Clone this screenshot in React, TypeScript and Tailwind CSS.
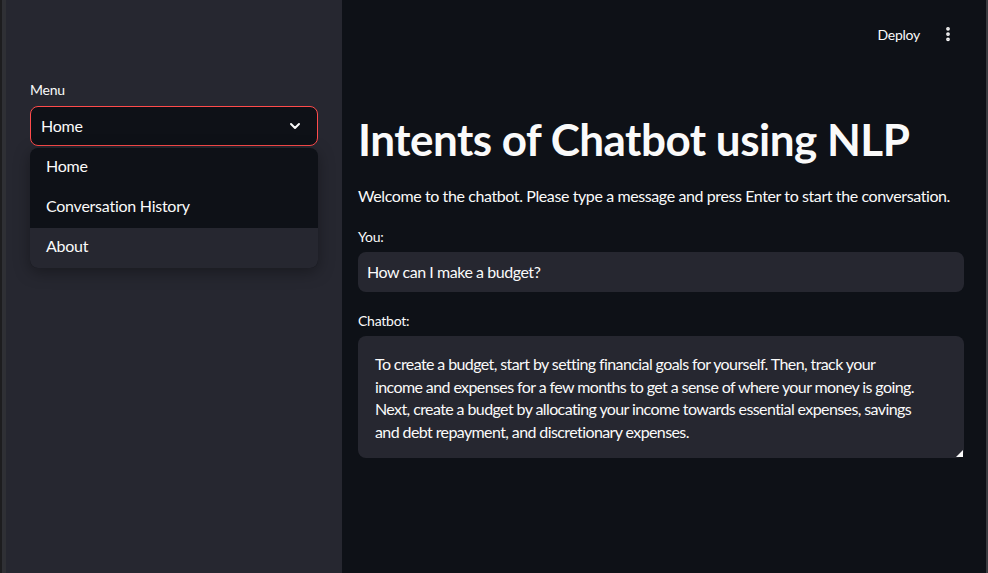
import { ChevronDown, EllipsisVertical } from 'lucide-react';

const font = { fontFamily: 'Lato, "Noto Sans", sans-serif' };

const menuItems = ['Home', 'Conversation History', 'About'];

const answerLines = [
  'To create a budget, start by setting financial goals for yourself. Then, track your',
  'income and expenses for a few months to get a sense of where your money is going.',
  'Next, create a budget by allocating your income towards essential expenses, savings',
  'and debt repayment, and discretionary expenses.',
];

const Sidebar = () => (
  <aside className="w-[336px] shrink-0 bg-[#262730] px-[24px] pt-[80px] tracking-[-0.25px]">
    <label className="block text-[14px] leading-[20px] text-[#fafafa]">Menu</label>
    <div className="mt-[6px] flex h-[40px] items-center justify-between rounded-[8px] border border-[#ff4b4b] bg-[#0e1117] pl-[10px] pr-[14px]">
      <span className="text-[16px] text-[#fafafa]">Home</span>
      <ChevronDown className="h-[16px] w-[16px] text-[#fafafa]" strokeWidth={3} />
    </div>
    <ul className="mt-[2px] overflow-hidden rounded-[8px] bg-[#0e1117] shadow-[0_4px_16px_rgba(0,0,0,0.35)]">
      {menuItems.map((item) => (
        <li
          key={item}
          className={`flex h-[40px] items-center pb-[4px] pl-[16px] text-[16px] text-[#fafafa] ${
            item === 'About' ? 'bg-[#262730]' : ''
          }`}
        >
          {item}
        </li>
      ))}
    </ul>
  </aside>
);

const App = () => {
  return (
    <div style={font} className="flex h-[573px] w-[988px] overflow-hidden bg-[#0e1117]">
      <div className="flex w-[6px] shrink-0">
        <div className="w-[2px] bg-[#1d1d1f]" />
        <div className="w-[4px] bg-[#2f3035]" />
      </div>

      <Sidebar />

      <main className="flex min-w-0 flex-1 flex-col tracking-[-0.45px]">
        <header className="flex h-[68px] items-center justify-end pr-[29px] tracking-[-0.25px]">
          <span className="text-[14px] text-[#fafafa]">Deploy</span>
          <EllipsisVertical className="ml-[19px] h-[18px] w-[18px] text-[#fafafa]" strokeWidth={3} />
        </header>

        <section className="pl-[16px] pr-[22px]">
          <h1 className="mt-[45px] text-[44px] font-bold leading-[53px] tracking-[-0.5px] text-[#fafafa]">
            Intents of Chatbot using NLP
          </h1>
          <p className="mt-[18px] whitespace-nowrap text-[16px] leading-[24px] tracking-[-0.4px] text-[#fafafa]">
            Welcome to the chatbot. Please type a message and press Enter to start the conversation.
          </p>

          <label className="mt-[19px] block text-[14px] leading-[20px] tracking-[-0.25px] text-[#fafafa]">You:</label>
          <div className="mt-[5px] flex h-[40px] items-center rounded-[8px] bg-[#262730] px-[9px] text-[16px] text-[#fafafa]">
            How can I make a budget?
          </div>

          <label className="mt-[19px] block text-[14px] leading-[20px] tracking-[-0.25px] text-[#fafafa]">Chatbot:</label>
          <div className="relative mt-[5px] h-[122px] rounded-[8px] bg-[#262730] px-[17px] pt-[17px] text-[16px] leading-[22.7px] tracking-[-0.6px] text-[#fafafa]">
            {answerLines.map((line) => (
              <div key={line} className="whitespace-nowrap">
                {line}
              </div>
            ))}
            <svg className="absolute bottom-[1px] right-[1px]" width="7" height="7" viewBox="0 0 7 7">
              <path d="M7 0 L7 7 L0 7 Z" fill="#fafafa" />
            </svg>
          </div>
        </section>
      </main>

      <div className="w-[2px] shrink-0 bg-[#3a3b40]" />
    </div>
  );
};

export default App;
